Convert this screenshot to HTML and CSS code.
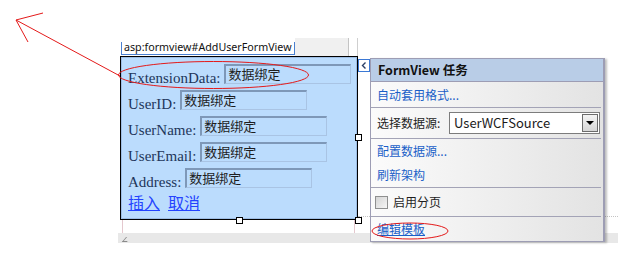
FILE: index.html
```html
<!DOCTYPE html>
<html>
  <head>
    <title>FormView 任务</title>
    <meta name="viewport" content="width=device-width, initial-scale=1" />
    <link rel="stylesheet" href="styles.css">
  </head>
  <body>
    <div class="stage">
      <div class="surface">
        <div class="tabstrip">
          <div class="tab">asp:formview#AddUserFormView</div>
          <div class="strip-fill"></div>
          <div class="strip-gap"></div>
        </div>
        <div class="formbox">
          <div class="formbody">
            <div class="row"><span class="label">ExtensionData:</span><span class="field">数据绑定</span></div>
            <div class="row"><span class="label">UserID:</span><span class="field">数据绑定</span></div>
            <div class="row"><span class="label">UserName:</span><span class="field">数据绑定</span></div>
            <div class="row"><span class="label">UserEmail:</span><span class="field">数据绑定</span></div>
            <div class="row"><span class="label">Address:</span><span class="field">数据绑定</span></div>
            <div class="links"><a href="#">插入</a><a href="#">取消</a></div>
          </div>
          <span class="handle h-right"></span>
          <span class="handle h-bottom"></span>
          <span class="handle h-corner"></span>
        </div>
        <div class="below"></div>
      </div>
      <div class="hbar"><span class="grip"></span></div>
    </div>

    <div class="smarttag">
      <div class="toggle">
        <svg width="9" height="11" viewBox="0 0 9 11"><path d="M5.5 2.5 L2.5 5.5 L5.5 8.5" fill="none" stroke="#2a3f66" stroke-width="1.4"/></svg>
      </div>
      <div class="tasks">
        <div class="tasks-head">FormView 任务</div>
        <div class="item"><a href="#">自动套用格式...</a></div>
        <div class="sep"></div>
        <div class="item select-row">
          <span class="select-label">选择数据源:</span>
          <div class="select">
            <span>UserWCFSource</span>
            <span class="drop"><i></i></span>
          </div>
        </div>
        <div class="sep"></div>
        <div class="item"><a href="#">配置数据源...</a></div>
        <div class="item"><a href="#">刷新架构</a></div>
        <div class="sep"></div>
        <div class="item check-row"><span class="check"></span>启用分页</div>
        <div class="sep"></div>
        <div class="item"><a href="#" class="under">编辑模板</a></div>
      </div>
    </div>

    <div class="dots"></div>

    <svg class="marks" width="634" height="255" viewBox="0 0 634 255">
      <ellipse cx="213.5" cy="75" rx="95" ry="13.5" />
      <line x1="16" y1="20" x2="120" y2="76" />
      <line x1="16" y1="20" x2="43" y2="13" />
      <line x1="16" y1="20" x2="28" y2="42" />
      <ellipse cx="410" cy="231" rx="38" ry="8" />
    </svg>
  </body>
</html>
```

FILE: styles.css
```css
html {
  font-family: "Noto Sans CJK SC", sans-serif;
}
body {
  margin: 0;
  width: 634px;
  height: 255px;
  overflow: hidden;
  position: relative;
  background: #fff;
}
.stage {
  padding: 38px 0 0 118px;
}
.surface {
  width: 240px;
}
.tabstrip {
  display: flex;
  height: 18px;
  margin-left: 3px;
}
.tab {
  margin-top: 4px;
  height: 12px;
  padding: 0 2px 0 2px;
  border: 1px solid #4a80d0;
  border-top: none;
  background: #fff;
  font-family: "Noto Sans", sans-serif;
  font-size: 10.7px;
  line-height: 11px;
  color: #111;
}
.strip-fill {
  flex: 1;
  background: #f0f0f0;
  border-right: 1px solid #c4c4c4;
}
.strip-gap {
  width: 8px;
  border-right: 1px solid #cfcfcf;
}
.formbox {
  position: relative;
  margin-left: 2px;
  width: 238px;
  height: 164px;
  box-sizing: border-box;
  border: 1px solid #000;
}
.formbody {
  height: 100%;
  box-sizing: border-box;
  border: 1px solid #9dbde4;
  background: #bbdcfd;
  padding: 2px 0 0 6px;
}
.row {
  display: flex;
  align-items: flex-end;
  height: 26px;
}
.label {
  font-family: "Liberation Serif", serif;
  font-size: 15px;
  line-height: 15px;
  color: #22365a;
}
.field {
  margin: 0 0 2px 4px;
  width: 127px;
  height: 20px;
  box-sizing: border-box;
  border: 1px solid #a9c4e4;
  border-top: 2px solid #7e98b8;
  border-left: 2px solid #7e98b8;
  padding-left: 2px;
  font-size: 13px;
  line-height: 16px;
  color: #1e1e1e;
}
.links {
  display: flex;
  gap: 8px;
  margin-top: 2px;
  font-size: 16px;
  line-height: 20px;
}
.links a {
  color: #2443ff;
}
.handle {
  position: absolute;
  width: 7px;
  height: 7px;
  box-sizing: border-box;
  border: 1px solid #000;
  background: #fff;
}
.h-right {
  right: -5px;
  top: 77px;
}
.h-bottom {
  left: 115px;
  bottom: -5px;
}
.h-corner {
  right: -5px;
  bottom: -5px;
}
.below {
  height: 13px;
  margin: 0 3px 0 4px;
  border-left: 1px solid #e4c8ce;
  border-right: 1px solid #e4c8ce;
}
.hbar {
  position: relative;
  width: 500px;
  height: 10px;
  background: #e8e8e8;
}
.grip {
  position: absolute;
  left: 6px;
  top: 4px;
  width: 4px;
  height: 4px;
  border-left: 1px solid #8a8a8a;
  border-bottom: 1px solid #8a8a8a;
  transform: skewX(-40deg);
}
.dots {
  position: absolute;
  left: 358px;
  top: 216px;
  width: 260px;
  border-top: 1px dotted #c4c4c4;
}
.smarttag {
  position: absolute;
  left: 358px;
  top: 58px;
  display: flex;
  align-items: flex-start;
  z-index: 2;
}
.toggle {
  margin-top: 1px;
  width: 12px;
  height: 13px;
  box-sizing: border-box;
  border: 1px solid #3b78d4;
  background: #fff;
  display: flex;
  align-items: center;
  justify-content: center;
}
.tasks {
  width: 235px;
  box-sizing: border-box;
  border: 1px solid #9d9db4;
  border-right-width: 2px;
  background: linear-gradient(to right, #fbfbfb, #e3e3e3);
  box-shadow: 2px 1px 2px rgba(0, 0, 0, 0.25);
  font-size: 12px;
  color: #1e1e1e;
}
.tasks-head {
  height: 22px;
  line-height: 22px;
  padding-left: 7px;
  background: #b9cde7;
  border-bottom: 1px solid #9d9db4;
  font-weight: bold;
  font-size: 12.5px;
  color: #111;
}
.item {
  height: 24px;
  line-height: 24px;
  padding-left: 6px;
}
.item a {
  color: #1a5fc8;
  text-decoration: none;
}
.item a.under {
  text-decoration: underline;
}
.sep {
  height: 1px;
  margin-right: 2px;
  background: #a3a3b6;
}
.tasks-head + .item {
  height: 25px;
  line-height: 25px;
}
.select-row {
  display: flex;
  align-items: center;
  height: 30px;
}
.select-label {
  width: 72px;
}
.select {
  position: relative;
  width: 151px;
  height: 22px;
  box-sizing: border-box;
  border: 1px solid #7c7c7c;
  background: #fff;
  padding-left: 4px;
  font-size: 13px;
  line-height: 20px;
  color: #1a1a1a;
}
.drop {
  position: absolute;
  right: 1px;
  top: 1px;
  width: 16px;
  height: 18px;
  box-sizing: border-box;
  border: 1px solid #6c6c6c;
  background: linear-gradient(#f4f4f4, #d6d6d6);
  display: flex;
  align-items: center;
  justify-content: center;
}
.drop i {
  width: 0;
  height: 0;
  border-left: 4px solid transparent;
  border-right: 4px solid transparent;
  border-top: 4px solid #000;
}
.check-row {
  display: flex;
  align-items: center;
  gap: 5px;
  height: 28px;
  padding-left: 4px;
}
.check {
  width: 13px;
  height: 13px;
  box-sizing: border-box;
  border: 1px solid #8e8f8f;
  background: linear-gradient(135deg, #d4d4d4, #f6f6f6);
}
.marks {
  position: absolute;
  left: 0;
  top: 0;
  z-index: 3;
  pointer-events: none;
}
.marks ellipse,
.marks line {
  fill: none;
  stroke: #e41a1a;
  stroke-width: 1;
}
```
